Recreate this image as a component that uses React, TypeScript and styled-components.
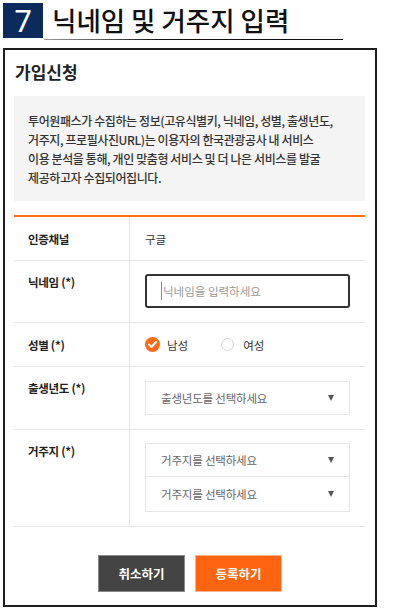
import React from "react";
import styled, { createGlobalStyle } from "styled-components";

const GlobalStyle = createGlobalStyle`
  html, body { margin: 0; padding: 0; background: #fff; }
  body { font-family: "Noto Sans CJK KR", "Noto Sans", sans-serif; color: #222; }
  * { box-sizing: border-box; }
`;

const Page = styled.div`
  padding: 3px 0 0 3px;
  width: 377px;
`;

const TitleRow = styled.div`
  display: flex;
  align-items: flex-start;
`;

const NumBox = styled.div`
  width: 40px;
  height: 35px;
  background: #0c2b5c;
  color: #fff;
  font-family: "Noto Sans", "Liberation Sans", sans-serif;
  font-size: 31px;
  line-height: 35px;
  text-align: center;
`;

const TitleText = styled.h1`
  margin: 0 0 0 1px;
  width: 299px;
  height: 37px;
  padding-left: 8px;
  font-size: 26.5px;
  font-weight: 500;
  line-height: 34px;
  letter-spacing: 0;
  color: #111;
  background: linear-gradient(to right, #9a9a9a, #111 40%, #111) left bottom / 100% 1px no-repeat;
`;

const Panel = styled.section`
  margin-top: 8px;
  width: 374px;
  height: 559px;
  border: 2px solid #1e1e1e;
  padding: 0 10px 0 9px;
`;

const PanelTitle = styled.h2`
  margin: 0 0 12px;
  padding: 10px 0 0 1px;
  font-size: 17px;
  font-weight: 700;
  line-height: 24px;
  color: #222;
`;

const Notice = styled.p`
  margin: 0;
  height: 105px;
  background: #f4f4f4;
  padding: 15px 6px 13px 14px;
  font-size: 12px;
  line-height: 19px;
  font-weight: 500;
  color: #333;
  letter-spacing: -0.4px;
  white-space: nowrap;
`;

const Table = styled.div`
  margin-top: 14px;
  border-top: 2px solid #ff6a13;
`;

const Row = styled.div`
  display: grid;
  grid-template-columns: 116px 1fr;
  border-bottom: 1px solid #e6e6e6;
`;

const Label = styled.div<{ $center?: boolean }>`
  border-right: 1px solid #e6e6e6;
  padding: ${(p) => (p.$center ? "0 0 0 14px" : "12px 0 0 14px")};
  display: flex;
  align-items: ${(p) => (p.$center ? "center" : "flex-start")};
  font-size: 11.5px;
  font-weight: 700;
  line-height: 18px;
  color: #222;
  letter-spacing: -0.3px;
`;

const Value = styled.div<{ $h?: number; $pt?: number; $pb?: number }>`
  min-height: ${(p) => p.$h ?? 0}px;
  padding: ${(p) => p.$pt ?? 0}px 15px ${(p) => p.$pb ?? 0}px 15px;
  display: flex;
  flex-direction: column;
  justify-content: center;
  font-size: 11.5px;
  color: #333;
`;

const TextInput = styled.div`
  height: 34px;
  border: 2px solid #333;
  border-radius: 3px;
  display: flex;
  align-items: center;
  padding-left: 14px;
  font-size: 11.5px;
  color: #999;
`;

const Caret = styled.span`
  display: inline-block;
  width: 1px;
  height: 18px;
  background: #888;
  margin-right: 1px;
`;

const Select = styled.div<{ $stack?: boolean }>`
  height: ${(p) => (p.$stack ? 35 : 34)}px;
  border: 1px solid #e6e6e6;
  border-top: ${(p) => (p.$stack ? "none" : "1px solid #e6e6e6")};
  display: flex;
  align-items: center;
  justify-content: space-between;
  padding: 0 15px 0 15px;
  font-size: 11.5px;
  color: #666;
  letter-spacing: -0.2px;
`;

const Arrow = styled.span`
  width: 0;
  height: 0;
  border-left: 3px solid transparent;
  border-right: 3px solid transparent;
  border-top: 6px solid #555;
`;

const RadioGroup = styled.div`
  display: flex;
  align-items: center;
`;

const RadioItem = styled.label`
  display: flex;
  align-items: center;
  margin-right: 32px;
  font-size: 11.5px;
  color: #333;
`;

const RadioDot = styled.span<{ $checked?: boolean }>`
  width: ${(p) => (p.$checked ? 15 : 13)}px;
  height: ${(p) => (p.$checked ? 15 : 13)}px;
  border-radius: 50%;
  background: ${(p) => (p.$checked ? "#ff6a13" : "#fff")};
  border: ${(p) => (p.$checked ? "none" : "1px solid #d6d6d6")};
  margin-right: ${(p) => (p.$checked ? 7 : 9)}px;
  margin-left: ${(p) => (p.$checked ? 0 : 1)}px;
  display: flex;
  align-items: center;
  justify-content: center;
`;

const Buttons = styled.div`
  display: flex;
  justify-content: center;
  gap: 10px;
  padding-top: 28px;
  padding-left: 1px;
`;

const Button = styled.button<{ $primary?: boolean }>`
  width: 87px;
  height: 37px;
  border: 1px solid ${(p) => (p.$primary ? "#ffb58a" : "#8a8a8a")};
  background: ${(p) => (p.$primary ? "#ff6410" : "#444")};
  color: #fff;
  font-family: "Noto Sans CJK KR", sans-serif;
  font-size: 12.5px;
  font-weight: 700;
  cursor: pointer;
`;

export default function App() {
  return (
    <>
      <GlobalStyle />
      <Page>
        <TitleRow>
          <NumBox>7</NumBox>
          <TitleText>닉네임 및 거주지 입력</TitleText>
        </TitleRow>
        <Panel>
          <PanelTitle>가입신청</PanelTitle>
          <Notice>
            투어원패스가 수집하는 정보(고유식별키, 닉네임, 성별, 출생년도,
            <br />
            거주지, 프로필사진URL)는 이용자의 한국관광공사 내 서비스
            <br />
            이용 분석을 통해, 개인 맞춤형 서비스 및 더 나은 서비스를 발굴
            <br />
            제공하고자 수집되어집니다.
          </Notice>
          <Table>
            <Row>
              <Label $center>인증채널</Label>
              <Value $h={43}>구글</Value>
            </Row>
            <Row>
              <Label>닉네임 (*)</Label>
              <Value $pt={13} $pb={14}>
                <TextInput>
                  <Caret />
                  닉네임을 입력하세요
                </TextInput>
              </Value>
            </Row>
            <Row>
              <Label $center>성별 (*)</Label>
              <Value $h={43}>
                <RadioGroup>
                  <RadioItem>
                    <RadioDot $checked>
                      <svg width="9" height="7" viewBox="0 0 9 7">
                        <polyline points="1,3.5 3.5,6 8,1" fill="none" stroke="#fff" strokeWidth="2" strokeLinecap="round" strokeLinejoin="round" />
                      </svg>
                    </RadioDot>
                    남성
                  </RadioItem>
                  <RadioItem>
                    <RadioDot />
                    여성
                  </RadioItem>
                </RadioGroup>
              </Value>
            </Row>
            <Row>
              <Label>출생년도 (*)</Label>
              <Value $pt={14} $pb={14}>
                <Select>
                  출생년도를 선택하세요
                  <Arrow />
                </Select>
              </Value>
            </Row>
            <Row>
              <Label>거주지 (*)</Label>
              <Value $pt={13} $pb={14}>
                <Select>
                  거주지를 선택하세요
                  <Arrow />
                </Select>
                <Select $stack>
                  거주지를 선택하세요
                  <Arrow />
                </Select>
              </Value>
            </Row>
          </Table>
          <Buttons>
            <Button>취소하기</Button>
            <Button $primary>등록하기</Button>
          </Buttons>
        </Panel>
      </Page>
    </>
  );
}
